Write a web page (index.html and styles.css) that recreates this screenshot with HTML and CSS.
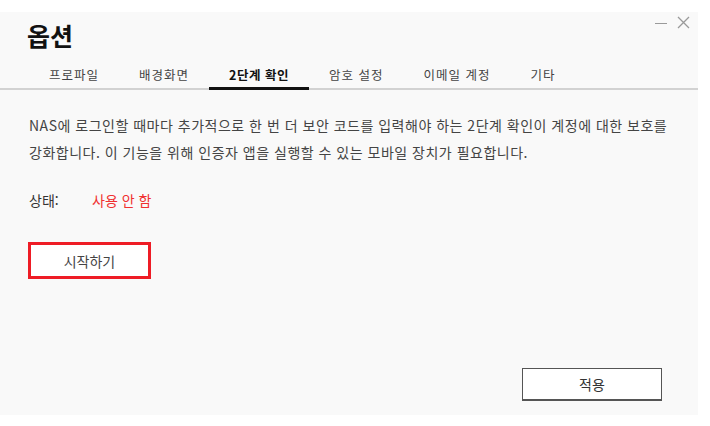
FILE: index.html
```html
<!DOCTYPE html>
<html lang="ko">
<head>
<meta charset="utf-8">
<link rel="stylesheet" href="styles.css">
</head>
<body>
<div class="dialog">
  <div class="win-controls">
    <span class="ctl-min"></span>
    <svg class="ctl-close" width="13" height="13" viewBox="0 0 13 13"><path d="M1 1 L12 12 M12 1 L1 12" stroke="#9a9a9a" stroke-width="1.3" fill="none"/></svg>
  </div>
  <h1 class="title">옵션</h1>
  <nav class="tabs">
    <span class="tab">프로파일</span>
    <span class="tab">배경화면</span>
    <span class="tab active">2단계 확인</span>
    <span class="tab">암호 설정</span>
    <span class="tab">이메일 계정</span>
    <span class="tab">기타</span>
  </nav>
  <div class="content">
    <p class="desc">NAS에 로그인할 때마다 추가적으로 한 번 더 보안 코드를 입력해야 하는 2단계 확인이 계정에 대한 보호를 강화합니다. 이 기능을 위해 인증자 앱을 실행할 수 있는 모바일 장치가 필요합니다.</p>
    <div class="status"><span class="status-label">상태:</span><span class="status-value">사용 안 함</span></div>
    <button class="start-btn">시작하기</button>
  </div>
  <div class="footer">
    <button class="apply-btn">적용</button>
  </div>
</div>
</body>
</html>
```
FILE: styles.css
```css
html, body {
  margin: 0;
  padding: 0;
  background: #ffffff;
}
body {
  font-family: "Noto Sans CJK KR", "Noto Sans", sans-serif;
  color: #333;
}
.dialog {
  position: relative;
  margin-top: 12px;
  width: 698px;
  height: 403px;
  background: #f9f9f9;
  display: flex;
  flex-direction: column;
}
.win-controls {
  position: absolute;
  top: 4px;
  right: 8px;
  display: flex;
  align-items: center;
  gap: 10px;
}
.ctl-min {
  display: block;
  width: 12px;
  height: 1px;
  background: #9a9a9a;
  margin-top: 1px;
}
.ctl-close {
  display: block;
}
.title {
  margin: 0;
  padding: 5px 0 0 27px;
  font-size: 25px;
  font-weight: 700;
  line-height: 36px;
  color: #111;
}
.tabs {
  display: flex;
  margin-top: 8px;
  padding-left: 29px;
  border-bottom: 2px solid #d2d2d2;
}
.tab {
  padding: 2px 20px 0;
  font-size: 12.5px;
  letter-spacing: 1px;
  line-height: 24px;
  color: #444;
  border-bottom: 3px solid transparent;
  margin-bottom: -2px;
}
.tab.active {
  font-weight: 700;
  letter-spacing: 0.5px;
  color: #111;
  border-bottom-color: #111;
}
.content {
  padding: 22px 29px 0;
  flex: 1;
}
.desc {
  margin: 0;
  font-size: 14px;
  letter-spacing: 0.5px;
  line-height: 27px;
  color: #444;
  max-width: 645px;
}
.status {
  margin-top: 24px;
  font-size: 14px;
  line-height: 20px;
  display: flex;
}
.status-label {
  width: 63px;
  color: #333;
}
.status-value {
  color: #f03030;
}
.start-btn {
  display: block;
  margin-top: 32px;
  width: 123px;
  height: 37px;
  border: 3px solid #ee1c25;
  background: #fff;
  font-family: inherit;
  font-size: 14px;
  color: #444;
  padding: 0;
  margin-left: -1px;
}
.footer {
  display: flex;
  justify-content: flex-end;
  padding: 0 36px 14px 0;
}
.apply-btn {
  width: 140px;
  height: 33px;
  background: #fff;
  border: 1px solid #555;
  border-bottom-width: 2px;
  font-family: inherit;
  font-size: 14px;
  color: #333;
  padding: 0;
}
```
